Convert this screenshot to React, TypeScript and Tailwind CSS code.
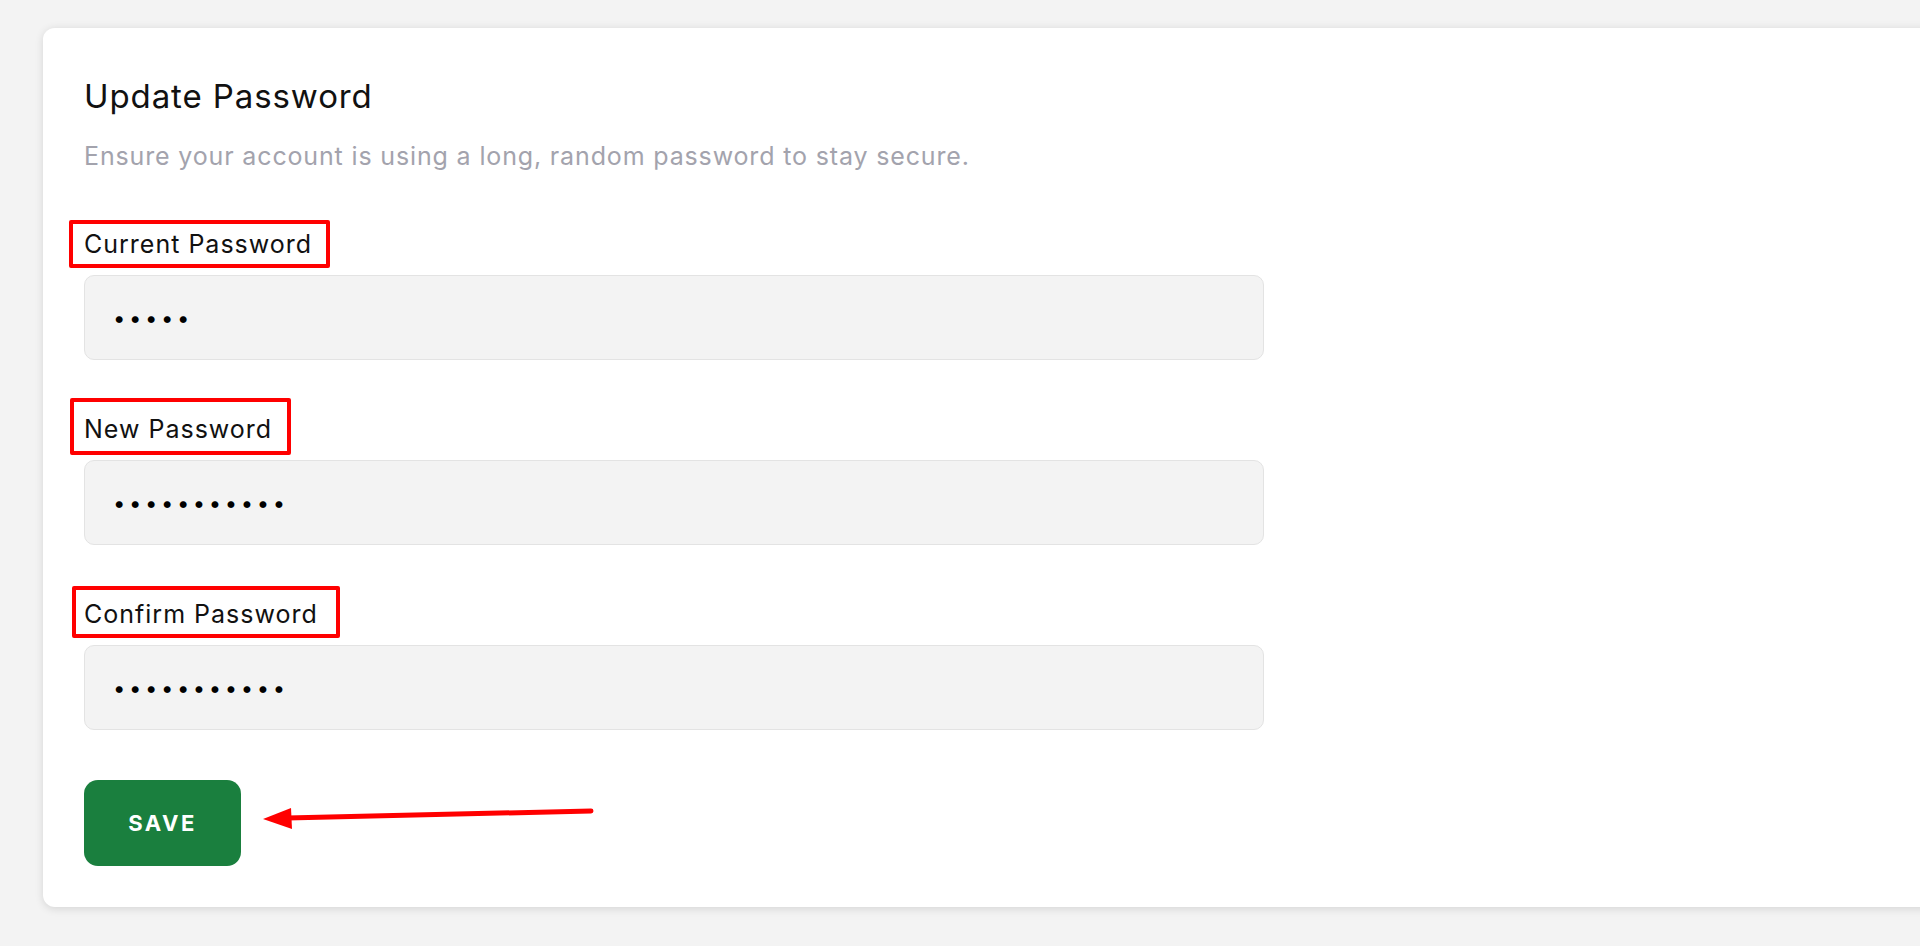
import React from "react";

function Field({ label, value, boxClass }: { label: string; value: string; boxClass: string }) {
  return (
    <div className="flex flex-col">
      <div className="flex h-[30px] items-center">
        <span className="relative inline-block text-[25px] leading-[30px] tracking-[1px] text-[#111111]">
          <span aria-hidden="true" className={`absolute border-4 border-[#ff0000] rounded-[2px] pointer-events-none ${boxClass}`} />
          {label}
        </span>
      </div>
      <input
        type="password"
        readOnly
        value={value}
        className="mt-4 h-[85px] w-[1180px] rounded-[10px] border border-[#e3e3e3] bg-[#f3f3f3] px-[28px] text-[22px] tracking-[3.6px] text-black outline-none"
      />
    </div>
  );
}

function Arrow() {
  return (
    <svg className="absolute left-[175px] top-[22px]" width="340" height="30" viewBox="0 0 340 30" fill="none">
      <path d="M28 16 L332 9" stroke="#ff0000" strokeWidth="5" strokeLinecap="round" />
      <path d="M4 17 L32 6 L33 27 Z" fill="#ff0000" />
    </svg>
  );
}

export default function App() {
  return (
    <div className="min-h-[946px] w-full overflow-hidden bg-[#f3f3f3] pt-[27px] pl-[43px] font-['Inter',sans-serif]">
      <div className="w-[1900px] rounded-l-[12px] border-t border-[#e8e8e8] bg-white pt-[48px] pb-[41px] pl-[41px] shadow-[0_2px_8px_rgba(0,0,0,0.12)]">
        <h2 className="text-[33px] leading-[40px] font-normal tracking-[0.9px] text-[#111111]">Update Password</h2>
        <p className="mt-[24px] text-[25px] leading-[32px] tracking-[0.85px] text-[#a3a3ad]">
          Ensure your account is using a long, random password to stay secure.
        </p>
        <div className="mt-[57px] flex flex-col gap-[54px]">
          <Field label="Current Password" value="12345" boxClass="-left-[15px] -right-[18px] -top-[9px] -bottom-[9px]" />
          <Field label="New Password" value="12345678901" boxClass="-left-[14px] -right-[19px] -top-[16px] -bottom-[11px]" />
          <Field label="Confirm Password" value="12345678901" boxClass="-left-[12px] -right-[22px] -top-[13px] -bottom-[9px]" />
        </div>
        <div className="relative mt-[50px]">
          <button className="h-[86px] w-[157px] rounded-[14px] bg-[#1a7f3e] text-[22px] font-bold tracking-[2.5px] text-white">
            SAVE
          </button>
          <Arrow />
        </div>
      </div>
    </div>
  );
}
